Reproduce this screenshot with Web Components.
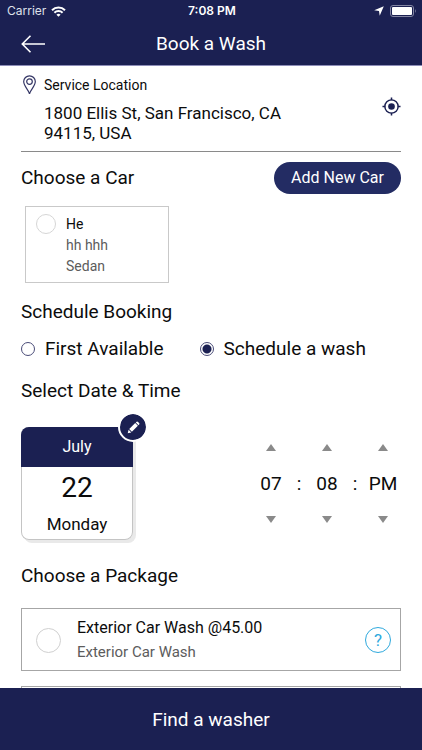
<!DOCTYPE html>
<html lang="en">
<head>
<meta charset="utf-8">
<meta name="viewport" content="width=device-width, initial-scale=1">
<title>Book a Wash</title>
<style>
  html, body { margin: 0; height: 100%; }
  body { font-family: Roboto, "Liberation Sans", sans-serif; color: #0c0c0c; background: #fff; --navy: #1b2052; --line: #a6a6a6; --muted: #5c5c5c; }
</style>
</head>
<body>
<wash-app></wash-app>

<script>
const base = `<style>
  *, ::before, ::after { box-sizing: border-box; }
  :host { display: block; box-sizing: border-box; }
  button { font: inherit; color: inherit; background: none; border: 0; padding: 0; margin: 0; cursor: pointer; }
  input[type=radio] { appearance: none; margin: 0; flex: none; border-radius: 50%; background: #fff; }
  svg { display: block; }
</style>`;

function define(name, html) {
  const t = document.createElement('template');
  t.innerHTML = base + html;
  customElements.define(name, class extends HTMLElement {
    constructor() {
      super();
      this.attachShadow({ mode: 'open' }).append(t.content.cloneNode(true));
    }
  });
}

define('status-bar', `<style>
  :host { display: grid; grid-template-columns: 1fr auto 1fr; align-items: center; height: 22px; padding: 0 5px 0 7px; color: #fff; font: 12px/16px Inter, Roboto, sans-serif; }
  .left, .right { display: flex; align-items: center; }
  .left { gap: 5px; color: #dfe0ea; }
  .right { justify-content: flex-end; gap: 6px; }
  .time { font-weight: 600; }
</style>
<div class="left"><span>Carrier</span>
  <svg width="15" height="11" viewBox="0 0 15 11" fill="none" stroke="#fff" stroke-width="2"><path d="M1 4.2a9.2 9.2 0 0 1 13 0M3.4 6.7a5.8 5.8 0 0 1 8.2 0"/><path d="M7.500 10.800 5.400 8.700a3 3 0 0 1 4.200 0z" fill="#fff" stroke="none"/></svg>
</div>
<div class="time">7:08 PM</div>
<div class="right">
  <svg width="10" height="10" viewBox="0 0 10 10" fill="#fff"><path d="M9.800.2 5.700 9.800 5 5 .2 4.300z"/></svg>
  <svg width="27" height="12" viewBox="0 0 27 12"><rect x=".5" y=".5" width="23" height="11" rx="2.500" fill="none" stroke="#8385a3"/><rect x="2" y="2" width="20" height="8" rx="1" fill="#fff"/><path d="M25 4q1.800 2 0 4z" fill="#8385a3"/></svg>
</div>`);

define('title-bar', `<style>
  :host { display: grid; grid-template-columns: 64px 1fr 64px; align-items: center; height: 44px; color: #fff; border-bottom: 1px solid #8d8db8; }
  button { justify-self: start; padding: 4px 0 4px 21px; }
  h1 { margin: 0; text-align: center; font-size: 19px; line-height: 24px; font-weight: 400; }
</style>
<button aria-label="Back"><svg width="25" height="18" viewBox="0 0 25 18" fill="none" stroke="#fff" stroke-width="1.600"><path d="M24 9H1.500M9.500.8 1.300 9l8.200 8.200"/></svg></button>
<h1><slot></slot></h1>`);

define('service-location', `<style>
  :host { display: flex; align-items: center; padding: 9px 0 8px; border-bottom: 1px solid #8a8a8a; }
  .info { flex: 1; display: grid; grid-template-columns: 15px 1fr; column-gap: 8px; row-gap: 8px; align-items: center; }
  .label { font-size: 14px; line-height: 20px; }
  .address { grid-column: 2; max-width: 260px; font-size: 17px; line-height: 20px; }
  .pin { justify-self: end; }
  button { padding-bottom: 6px; }
</style>
<div class="info">
  <svg class="pin" width="13" height="20" viewBox="0 0 13 20" fill="none" stroke="#343665" stroke-width="1.200"><path d="M6.500 18.800C5.800 15 .7 11.400.7 6.600a5.800 5.800 0 0 1 11.600 0c0 4.800-5.100 8.400-5.800 12.200z"/><circle cx="6.500" cy="6.600" r="2.800"/></svg>
  <span class="label">Service Location</span>
  <span class="address"><slot></slot></span>
</div>
<button aria-label="Use my location"><svg width="19" height="19" viewBox="0 0 20 20" fill="none" stroke="#1b2052"><circle cx="10" cy="10" r="7" stroke-width="1.500"/><circle cx="10" cy="10" r="3.500" fill="#1b2052" stroke="none"/><path d="M10 .5v3M10 16.500v3M.5 10h3M16.500 10h3" stroke-width="1.600"/></svg></button>`);

define('section-title', `<style>
  h2 { margin: 0; font-size: 19px; line-height: 24px; font-weight: 400; }
</style><h2><slot></slot></h2>`);

define('pill-button', `<style>
  button { display: block; height: 32px; padding: 0 17px; border-radius: 16px; background: #232c63; color: #fff; font-size: 16px; line-height: 32px; }
</style><button><slot></slot></button>`);

define('car-card', `<style>
  label { display: flex; width: 144px; padding: 7px 10px 5px; gap: 10px; border: 1px solid #c9c9c9; font-size: 14px; line-height: 21px; color: var(--muted); }
  input { width: 20px; height: 20px; border: 1px solid #d6d6d6; }
  .text { display: grid; }
  .name { color: #0c0c0c; }
</style>
<label><input type="radio" name="car">
  <span class="text"><span class="name"><slot name="name"></slot></span><slot name="model"></slot><slot name="type"></slot></span>
</label>`);

define('schedule-choice', `<style>
  :host { display: flex; gap: 36px; font-size: 19px; line-height: 24px; }
  label { display: flex; align-items: center; gap: 10px; }
  input { width: 14px; height: 14px; border: 1px solid #4a4c78; }
  input:checked { background: radial-gradient(circle, var(--navy) 0 4px, #fff 5px); }
</style>
<label><input type="radio" name="when">First Available</label>
<label><input type="radio" name="when" checked>Schedule a wash</label>`);

define('date-card', `<style>
  :host { position: relative; width: 112px; border-radius: 8px; box-shadow: 0 0 0 1px #c4c4c4 inset, 3px 3px 0 #e9e9e9; text-align: center; }
  .month { background: var(--navy); color: #fff; font-size: 16px; line-height: 40px; border-radius: 8px 8px 0 0; }
  .day { font-size: 28px; line-height: 32px; padding-top: 5px; }
  .week { font-size: 17px; line-height: 24px; padding: 8px 0 4px; }
  button { position: absolute; top: -15px; right: -15px; width: 30px; height: 30px; display: grid; place-items: center; border-radius: 50%; border: 2px solid #fff; background: var(--navy); background-clip: padding-box; }
</style>
<div class="month"><slot name="month"></slot></div>
<div class="day"><slot name="day"></slot></div>
<div class="week"><slot name="week"></slot></div>
<button aria-label="Edit date"><svg width="13" height="13" viewBox="0 0 13 13" fill="#fff"><path d="M.7 12.300 1.600 8.700 4.300 11.400zM2.200 8.100 8.200 2.100 10.900 4.800 4.900 10.800zM8.800 1.500 9.600.8Q10.300.2 11 .9L12.100 2Q12.800 2.700 12.200 3.400L11.500 4.200z"/></svg></button>`);

define('time-picker', `<style>
  :host { display: grid; grid-template-columns: 36px 20px 36px 20px 36px; grid-template-rows: 24px 48px 24px; align-items: center; justify-items: center; font-size: 19px; line-height: 24px; }
  button { width: 36px; height: 24px; display: grid; place-items: center; }
  .down { grid-row: 3; }
  .h { grid-column: 1; } .m { grid-column: 3; } .p { grid-column: 5; }
  span { grid-row: 2; }
  svg { fill: #8a8a8a; }
</style>
<button class="h" aria-label="Hour up"><svg width="10" height="7"><path d="M5 0 10 7H0z"/></svg></button>
<button class="m" aria-label="Minute up"><svg width="10" height="7"><path d="M5 0 10 7H0z"/></svg></button>
<button class="p" aria-label="Period up"><svg width="10" height="7"><path d="M5 0 10 7H0z"/></svg></button>
<span>07</span><span>:</span><span>08</span><span>:</span><span>PM</span>
<button class="h down" aria-label="Hour down"><svg width="10" height="7"><path d="M0 0H10L5 7z"/></svg></button>
<button class="m down" aria-label="Minute down"><svg width="10" height="7"><path d="M0 0H10L5 7z"/></svg></button>
<button class="p down" aria-label="Period down"><svg width="10" height="7"><path d="M0 0H10L5 7z"/></svg></button>`);

define('package-card', `<style>
  :host { display: flex; align-items: center; min-height: 63px; padding: 7px 9px 6px 14px; border: 1px solid var(--line); }
  label { flex: 1; display: flex; align-items: center; gap: 16px; }
  input { width: 25px; height: 25px; border: 1px solid #d0d0d0; }
  .text { display: grid; line-height: 24px; font-size: 15px; color: var(--muted); }
  .name { font-size: 16px; color: #0c0c0c; }
  button { width: 26px; height: 26px; border: 1px solid #2fa9dd; border-radius: 50%; color: #2fa9dd; font-size: 17px; line-height: 24px; }
</style>
<label><input type="radio" name="package"><span class="text"><span class="name"><slot name="name"></slot></span><slot name="detail"></slot></span></label>
<slot name="help"><button aria-label="Package details">?</button></slot>`);

define('wash-app', `<style>
  :host { display: flex; flex-direction: column; height: 100vh; }
  header, footer { flex: none; background: var(--navy); }
  main { flex: 1; min-height: 0; overflow-y: auto; scrollbar-width: none; padding: 0 21px; }
  .row { display: flex; justify-content: space-between; align-items: center; }
  .cars { padding-top: 10px; }
  car-card { margin: 12px 4px 17px; }
  schedule-choice { margin: 13px 0 18px; }
  .when { margin: 24px 0; }
  .packages { display: grid; gap: 15px; margin: 20px 0; }
  footer button { width: 100%; color: #fff; font-size: 19px; line-height: 24px; padding: 20px 0 18px; }
</style>
<header><status-bar></status-bar><title-bar>Book a Wash</title-bar></header>
<main>
  <service-location>1800 Ellis St, San Francisco, CA 94115, USA</service-location>
  <div class="row cars"><section-title>Choose a Car</section-title><pill-button>Add New Car</pill-button></div>
  <car-card><span slot="name">He</span><span slot="model">hh hhh</span><span slot="type">Sedan</span></car-card>
  <section-title>Schedule Booking</section-title>
  <schedule-choice></schedule-choice>
  <section-title>Select Date &amp; Time</section-title>
  <div class="row when">
    <date-card><span slot="month">July</span><span slot="day">22</span><span slot="week">Monday</span></date-card>
    <time-picker></time-picker>
  </div>
  <section-title>Choose a Package</section-title>
  <div class="packages">
    <package-card><span slot="name">Exterior Car Wash @45.00</span><span slot="detail">Exterior Car Wash</span></package-card>
    <package-card><span slot="help"></span></package-card>
  </div>
</main>
<footer><button>Find a washer</button></footer>`);
</script>
</body>
</html>
